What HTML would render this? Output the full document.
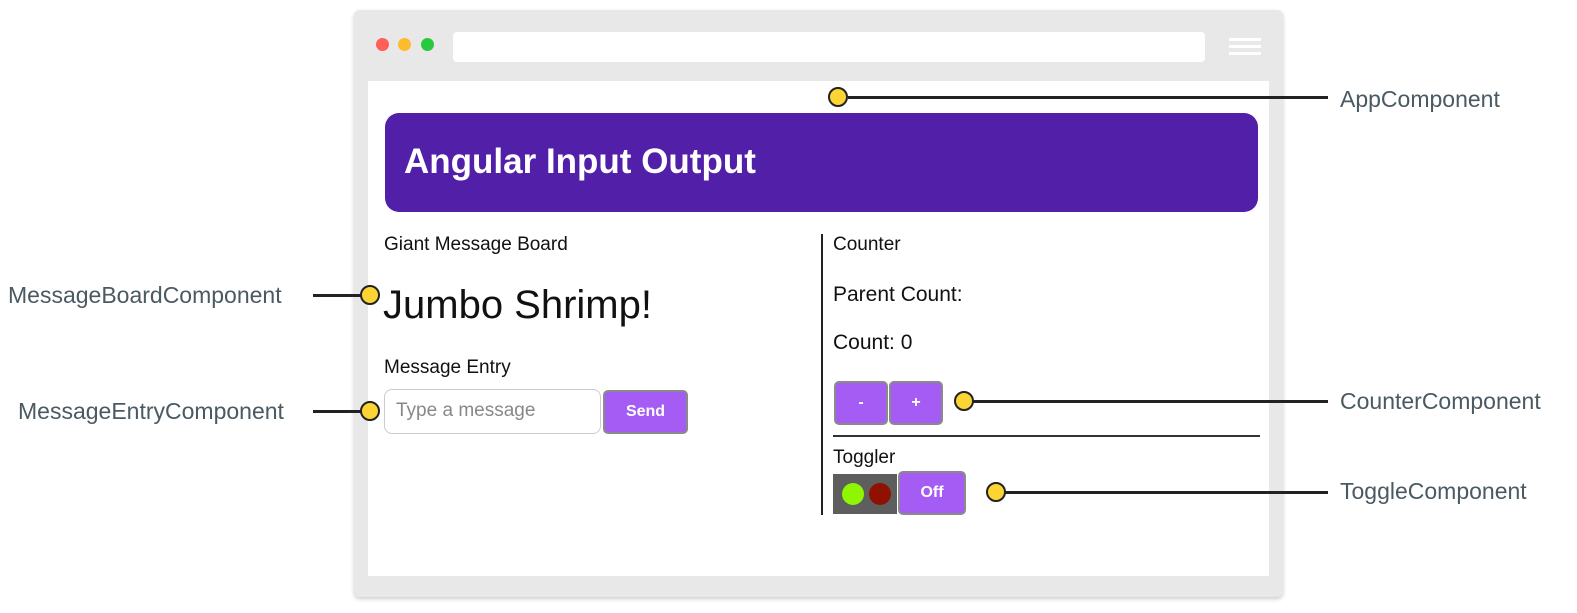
<!DOCTYPE html>
<html><head><meta charset="utf-8"><style>
*{margin:0;padding:0;box-sizing:border-box}
body{width:1577px;height:613px;background:#fff;position:relative;font-family:"Liberation Sans",sans-serif;overflow:hidden}
.a{position:absolute}
.frame{left:354px;top:10px;width:929px;height:587px;background:#e8e8e8;border-radius:6px;box-shadow:0 2px 4px rgba(0,0,0,.2)}
.inner{left:368px;top:81px;width:901px;height:495px;background:#fff}
.dot{width:13px;height:13px;border-radius:50%;top:38px}
.url{left:453px;top:32px;width:752px;height:30px;background:#fff;border-radius:4px}
.hb{left:1229px;width:32px;height:3px;background:#fff}
.hdr{left:385px;top:113px;width:873px;height:99px;background:#5220a8;border-radius:14px;color:#fff;font-size:35px;font-weight:bold;padding:29px 0 0 19px}
.t{color:#111;font-size:19px}
.btn{background:#a45cf5;border:2px solid #8a8a8a;border-radius:5px;color:#fff;font-weight:bold;font-size:16px;text-align:center}
.pin{width:20px;height:20px;border-radius:50%;background:#fcd535;border:2.5px solid #222}
.ln{height:3px;background:#222}
.lbl{color:#4a5962;font-size:23px}
</style></head><body>
<div class="a frame"></div>
<div class="a dot" style="left:376px;background:#fe5f57"></div>
<div class="a dot" style="left:398px;background:#fdbc2e"></div>
<div class="a dot" style="left:421px;background:#28c840"></div>
<div class="a url"></div>
<div class="a hb" style="top:38px"></div><div class="a hb" style="top:45px"></div><div class="a hb" style="top:52px"></div>
<div class="a inner"></div>
<div class="a hdr">Angular Input Output</div>

<div class="a t" style="left:384px;top:234px">Giant Message Board</div>
<div class="a" style="left:383px;top:283px;font-size:40px;color:#111">Jumbo Shrimp!</div>
<div class="a t" style="left:384px;top:357px">Message Entry</div>
<div class="a" style="left:384px;top:389px;width:217px;height:45px;border:1px solid #ccc;border-radius:8px;color:#888;font-size:19px;padding:10px 0 0 11px">Type a message</div>
<div class="a btn" style="left:603px;top:390px;width:85px;height:44px;line-height:40px">Send</div>

<div class="a" style="left:821px;top:234px;width:2px;height:281px;background:#222"></div>
<div class="a t" style="left:833px;top:234px">Counter</div>
<div class="a" style="left:833px;top:283px;font-size:21px;color:#111">Parent Count:</div>
<div class="a" style="left:833px;top:331px;font-size:21px;color:#111">Count: 0</div>
<div class="a btn" style="left:834px;top:381px;width:54px;height:44px;line-height:40px">-</div>
<div class="a btn" style="left:889px;top:381px;width:54px;height:44px;line-height:40px">+</div>
<div class="a" style="left:833px;top:435px;width:427px;height:2px;background:#333"></div>
<div class="a t" style="left:833px;top:447px">Toggler</div>
<div class="a" style="left:833px;top:474px;width:64px;height:40px;background:#5e5e5e"></div>
<div class="a" style="left:842px;top:483px;width:22px;height:22px;border-radius:50%;background:#8ef600"></div>
<div class="a" style="left:869px;top:483px;width:22px;height:22px;border-radius:50%;background:#901100"></div>
<div class="a btn" style="left:898px;top:471px;width:68px;height:44px;line-height:40px">Off</div>

<div class="a ln" style="left:848px;top:96px;width:480px"></div>
<div class="a pin" style="left:828px;top:87px"></div>
<div class="a lbl" style="left:1340px;top:86px">AppComponent</div>

<div class="a ln" style="left:313px;top:294px;width:50px"></div>
<div class="a pin" style="left:360px;top:285px"></div>
<div class="a lbl" style="left:8px;top:282px">MessageBoardComponent</div>

<div class="a ln" style="left:313px;top:410px;width:50px"></div>
<div class="a pin" style="left:360px;top:401px"></div>
<div class="a lbl" style="left:18px;top:398px">MessageEntryComponent</div>

<div class="a ln" style="left:970px;top:400px;width:358px"></div>
<div class="a pin" style="left:954px;top:391px"></div>
<div class="a lbl" style="left:1340px;top:388px">CounterComponent</div>

<div class="a ln" style="left:1000px;top:491px;width:328px"></div>
<div class="a pin" style="left:986px;top:482px"></div>
<div class="a lbl" style="left:1340px;top:478px">ToggleComponent</div>
</body></html>
